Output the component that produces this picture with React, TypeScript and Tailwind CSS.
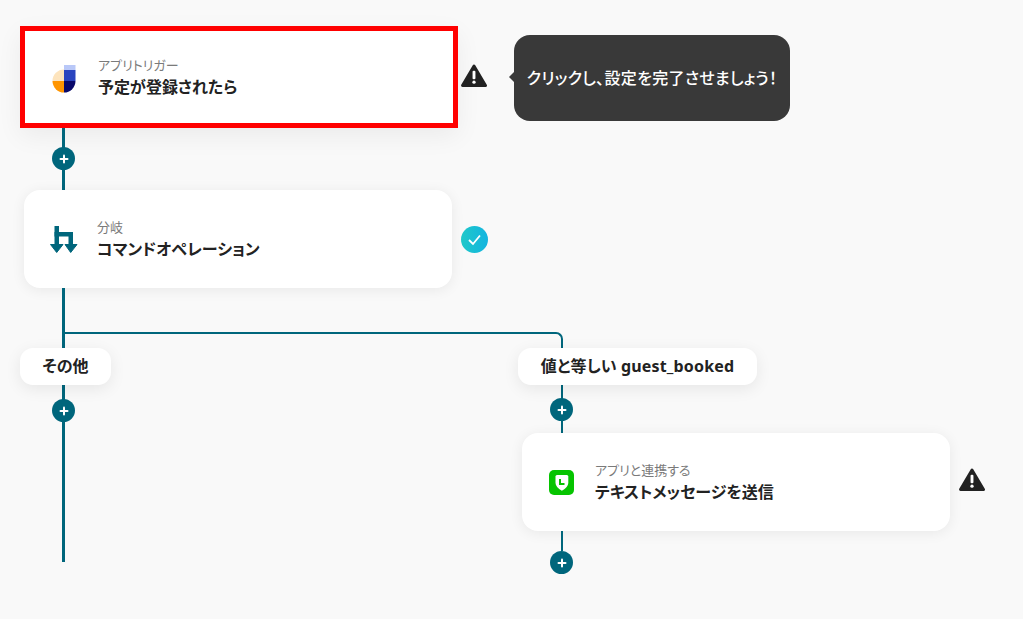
import type { ReactNode } from 'react';
import { Plus } from 'lucide-react';

function AddButton({ className = '' }: { className?: string }) {
  return (
    <div className={`size-[23px] shrink-0 rounded-full bg-[#00667c] flex items-center justify-center ${className}`}>
      <Plus className="size-[12px] text-white" strokeWidth={4} />
    </div>
  );
}

function WarningIcon({ className = '' }: { className?: string }) {
  return (
    <svg className={`w-[26px] h-[24px] shrink-0 ${className}`} viewBox="0 0 27 25">
      <path d="M13.5 2 L25.5 22.5 L1.5 22.5 Z" fill="#222" stroke="#222" strokeWidth="3" strokeLinejoin="round" />
      <rect x="12" y="7" width="3" height="9" rx="1.2" fill="#fff" />
      <circle cx="13.5" cy="19" r="1.7" fill="#fff" />
    </svg>
  );
}

function JicooLogo() {
  return (
    <svg className="mt-[3px]" width="26" height="28" viewBox="0 0 26 28">
      <rect x="12" y="0" width="11.5" height="5" fill="#b9c8f8" />
      <rect x="12" y="5" width="11.5" height="11" fill="#2a44bf" />
      <path d="M12 16 V4.5 A11.5 11.5 0 0 0 0.5 16 Z" fill="#fde4bd" />
      <path d="M12 16 V27.5 A11.5 11.5 0 0 1 0.5 16 Z" fill="#ff9500" />
      <path d="M12 16 V27.5 A11.5 11.5 0 0 0 23.5 16 Z" fill="#0a0a6b" />
    </svg>
  );
}

function BranchLogo() {
  return (
    <svg className="mt-[2px]" width="28" height="28" viewBox="0 0 28 28" fill="#00667c">
      <rect x="4.5" y="0" width="4.5" height="20" />
      <rect x="4.5" y="6" width="18.5" height="4.5" />
      <rect x="18.5" y="6" width="4.5" height="14" />
      <path d="M0.5 18.5 H13 L6.7 26.5 Z" stroke="#00667c" strokeLinejoin="round" />
      <path d="M15 18.5 H27 L20.7 26.5 Z" stroke="#00667c" strokeLinejoin="round" />
    </svg>
  );
}

function LineLogo() {
  return (
    <svg width="25" height="25" viewBox="0 0 25 25">
      <rect width="25" height="25" rx="5" fill="#06c400" />
      <path d="M6.5 6.5 Q6.5 5 8 5 H17.8 Q19.3 5 19.3 6.5 V13 Q19 17.5 12.9 20.7 Q6.8 17.5 6.5 13 Z" fill="#fff" />
      <path d="M11 9 V14 H15.5" fill="none" stroke="#06c400" strokeWidth="2" />
    </svg>
  );
}

function NodeCard({ className, icon, label, title }: { className: string; icon: ReactNode; label: string; title: string }) {
  return (
    <div className={`bg-white flex items-center shrink-0 ${className}`}>
      <div className="w-[73px] pl-[6px] flex justify-center shrink-0">{icon}</div>
      <div className="pt-[1px]">
        <div className="text-[13px] leading-[18px] text-[#7a7a7a]">{label}</div>
        <div className="text-[16px] leading-[26px] font-bold text-[#222]">{title}</div>
      </div>
    </div>
  );
}

function BranchLabel({ className, children }: { className: string; children: ReactNode }) {
  return (
    <div className={`h-[37px] pb-[1px] bg-white rounded-[13px] shadow-[0_4px_16px_rgba(0,0,0,0.08)] flex items-center justify-center text-[16px] font-bold text-[#222] relative ${className}`}>
      {children}
    </div>
  );
}

export default function App() {
  return (
    <div className="w-[1023px] h-[619px] overflow-hidden bg-[#f9f9f9] pl-[20px] pt-[26px] flex flex-col font-['Noto_Sans','Noto_Sans_CJK_JP',sans-serif] [font-feature-settings:'palt']">
      {/* Trigger */}
      <div className="flex items-center">
        <NodeCard
          className="w-[438px] h-[102px] border-[5px] border-[#ff0000] shadow-[0_8px_24px_rgba(0,0,0,0.06)]"
          icon={<JicooLogo />}
          label="アプリトリガー"
          title="予定が登録されたら"
        />
        <WarningIcon className="ml-[3px] mb-[2px]" />
        <div className="relative ml-[27px] mt-[2px] w-[276px] h-[86px] rounded-[16px] bg-[#393939] flex items-center justify-center text-[16px] tracking-[0.3px] font-medium text-white">
          <div className="absolute left-[-5px] top-[37px] border-y-[5px] border-r-[5px] border-y-transparent border-r-[#393939]" />
          クリックし、設定を完了させましょう！
        </div>
      </div>

      <div className="ml-[42px] w-[3px] h-[62px] pb-[1px] bg-[#00667c] flex items-center justify-center">
        <AddButton />
      </div>

      {/* Command operation */}
      <div className="ml-[4px] flex items-center">
        <NodeCard
          className="w-[428px] h-[98px] rounded-[16px] shadow-[0_2px_14px_rgba(0,0,0,0.07)]"
          icon={<BranchLogo />}
          label="分岐"
          title="コマンドオペレーション"
        />
        <div className="ml-[9px] size-[27px] rounded-full bg-gradient-to-r from-[#20c8c8] to-[#14b4e0] flex items-center justify-center">
          <svg width="15" height="15" viewBox="0 0 15 15" fill="none" stroke="#fff" strokeWidth="1.8">
            <path d="M2 8 L6 12 L13 3.5" />
          </svg>
        </div>
      </div>

      {/* Branches */}
      <div className="flex items-start">
        <div className="w-[498px] shrink-0 flex flex-col">
          <div className="ml-[42px] w-[3px] h-[60px] bg-[#00667c]" />
          <BranchLabel className="w-[91px]">その他</BranchLabel>
          <div className="ml-[42px] w-[3px] h-[177px] pt-[14px] bg-[#00667c] flex flex-col items-center">
            <AddButton />
          </div>
        </div>

        <div className="mt-[44px] flex flex-col">
          <div className="ml-[-454px] w-[499px] h-[16px] border-t-2 border-r-2 border-[#00667c] rounded-tr-[7px]" />
          <BranchLabel className="w-[239px] tracking-[0.15px]">値と等しい guest_booked</BranchLabel>
          <div className="ml-[43px] w-[2px] h-[48px] pt-[1px] bg-[#00667c] flex items-center justify-center">
            <AddButton className="mr-[1px]" />
          </div>
          <div className="ml-[4px] flex items-center">
            <NodeCard
              className="w-[428px] h-[98px] rounded-[16px] shadow-[0_2px_14px_rgba(0,0,0,0.07)]"
              icon={<LineLogo />}
              label="アプリと連携する"
              title="テキストメッセージを送信"
            />
            <WarningIcon className="ml-[9px] mb-[4px]" />
          </div>
          <div className="ml-[43px] w-[2px] h-[20px] bg-[#00667c]" />
          <AddButton className="ml-[32px]" />
        </div>
      </div>
    </div>
  );
}
